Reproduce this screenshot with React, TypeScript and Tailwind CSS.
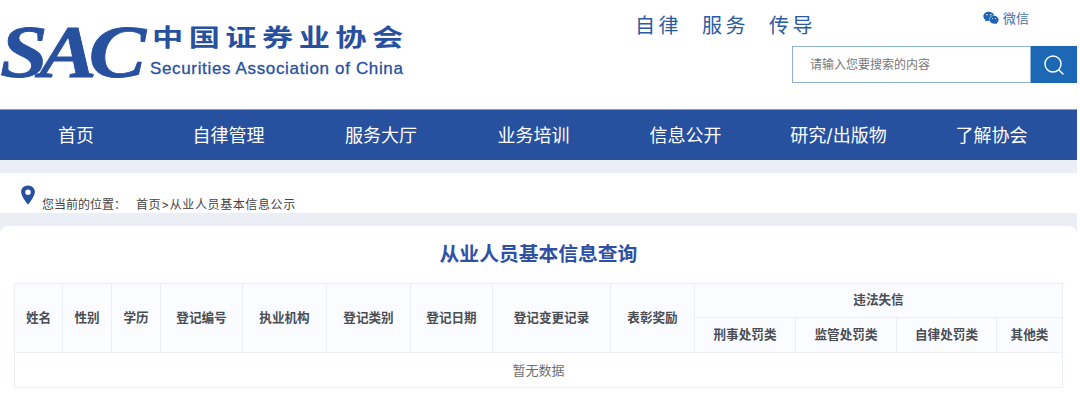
import { Search } from "lucide-react"
import { FaWeixin } from "react-icons/fa"
import { IoLocationSharp } from "react-icons/io5"

const CJK = "font-['Inter','Noto_Sans_CJK_SC',sans-serif]"

const NAV_ITEMS = [
  { label: "首页", className: "w-[152px]" },
  { label: "自律管理", className: "w-[153px]" },
  { label: "服务大厅", className: "w-[152px]" },
  { label: "业务培训", className: "w-[153px]" },
  { label: "信息公开", className: "w-[151px]" },
  { label: "研究/出版物", className: "w-[155px]" },
  { label: "了解协会", className: "w-[151px]" },
]

const SINGLE_COLS = [
  { label: "姓名", width: "w-[48px]" },
  { label: "性别", width: "w-[49px]" },
  { label: "学历", width: "w-[49px]" },
  { label: "登记编号", width: "w-[82px]" },
  { label: "执业机构", width: "w-[84px]" },
  { label: "登记类别", width: "w-[84px]" },
  { label: "登记日期", width: "w-[82px]" },
  { label: "登记变更记录", width: "w-[118px]" },
  { label: "表彰奖励", width: "w-[84px]" },
]

const SUB_COLS = [
  { label: "刑事处罚类", width: "w-[101px]" },
  { label: "监管处罚类", width: "w-[101px]" },
  { label: "自律处罚类", width: "w-[100px]" },
  { label: "其他类", width: "w-[66px]" },
]

function Logo() {
  return (
    <div className="flex items-start pt-[22px]">
      <div className="w-[150px] h-[60px] origin-left scale-x-[1.16] font-['Liberation_Serif',serif] font-bold italic text-[74px] leading-[60px] tracking-[-7px] [-webkit-text-stroke:0.8px_#27509f] text-[#27509f] whitespace-nowrap">
        SAC
      </div>
      <div className="flex flex-col">
        <div className={`${CJK} ml-[2px] mt-[1px] origin-left scale-x-[1.3] text-[24px] leading-[30px] font-bold tracking-[4.2px] text-[#27509f] whitespace-nowrap`}>
          中国证券业协会
        </div>
        <div className="mt-[6px] font-['Liberation_Sans',sans-serif] text-[17px] leading-[20px] tracking-[0.65px] [-webkit-text-stroke:0.3px_#27509f] text-[#27509f] whitespace-nowrap">
          Securities Association of China
        </div>
      </div>
    </div>
  )
}

function Header() {
  return (
    <header className="h-[109px] flex justify-between bg-white">
      <Logo />
      <div className="w-[445px] flex">
        <div className={`${CJK} w-[157px] pl-[3px] pt-[12px] text-[20px] leading-[28px] tracking-[3.5px] text-[#2a5aa0] whitespace-nowrap`}>
          <span>自律</span>
          <span className="ml-[20px]">服务</span>
          <span className="ml-[20px]">传导</span>
        </div>
        <div className="flex-1 flex flex-col items-end">
          <div className={`${CJK} h-[46px] w-[94px] pt-[9px] flex items-start gap-[4px] text-[13px] leading-[18px] text-[#3f6eb0]`}>
            <FaWeixin className="w-[16px] h-[16px] mt-[1px] text-[#1d65b3]" />
            <span>微信</span>
          </div>
          <div className="flex w-[285px] h-[37px]">
            <div className={`${CJK} flex-1 pl-[17px] border border-[#8fb0d8] flex items-center text-[12px] text-[#777]`}>
              请输入您要搜索的内容
            </div>
            <div className="w-[46px] bg-[#1c68b4] flex items-center justify-center">
              <Search className="w-[24px] h-[24px] text-white" strokeWidth={1.4} />
            </div>
          </div>
        </div>
      </div>
    </header>
  )
}

function Nav() {
  return (
    <nav className="h-[51px] flex bg-[#27509f] border-t border-[#7f9ccb]">
      {NAV_ITEMS.map((item) => (
        <div
          key={item.label}
          className={`${item.className} ${CJK} flex items-center justify-center text-[18px] text-white whitespace-nowrap`}
        >
          {item.label}
        </div>
      ))}
    </nav>
  )
}

function Breadcrumb() {
  return (
    <div className={`${CJK} h-[40px] flex bg-white pl-[17px] text-[12px] text-[#444]`}>
      <IoLocationSharp className="w-[22px] h-[22px] mt-[11px] text-[#27509f]" />
      <div className="ml-[3px] pt-[24px] leading-[16px] whitespace-nowrap">
        <span>您当前的位置：</span>
        <span className="ml-[10px] tracking-[0.6px]">首页&gt;从业人员基本信息公示</span>
      </div>
    </div>
  )
}

function ResultTable() {
  const th = "border-r border-b border-[#ebeef5] font-bold text-[12.6px] text-[#4a4d52] bg-[#fafcff] p-0 text-center"
  return (
    <table className={`${CJK} table-fixed w-[1049px] ml-[14px] border-separate border-spacing-0 border-t border-l border-b border-[#ebeef5]`}>
      <colgroup>
        {SINGLE_COLS.map((col) => (
          <col key={col.label} className={col.width} />
        ))}
        {SUB_COLS.map((col) => (
          <col key={col.label} className={col.width} />
        ))}
      </colgroup>
      <thead>
        <tr className="h-[34px]">
          {SINGLE_COLS.map((col) => (
            <th key={col.label} rowSpan={2} className={th}>
              {col.label}
            </th>
          ))}
          <th colSpan={4} className={`${th} bg-[#f9fafc]`}>
            违法失信
          </th>
        </tr>
        <tr className="h-[35px]">
          {SUB_COLS.map((col) => (
            <th key={col.label} className={th}>
              {col.label}
            </th>
          ))}
        </tr>
      </thead>
      <tbody>
        <tr className="h-[34px]">
          <td colSpan={13} className="pt-[2px] border-r border-[#ebeef5] text-center text-[13px] text-[#6b7075]">
            暂无数据
          </td>
        </tr>
      </tbody>
    </table>
  )
}

export default function App() {
  return (
    <div className="w-[1080px] h-[418px] bg-white overflow-hidden">
      <div className="w-[1077px]">
        <Header />
        <Nav />
        <div className="h-[13px] bg-[#eceef5]" />
        <Breadcrumb />
        <div className="bg-[#eceef5] pt-[13px]">
          <main className="rounded-t-[8px] bg-white h-[192px]">
            <h1 className={`${CJK} h-[57px] pt-[13px] text-center text-[19.8px] leading-[30px] font-bold text-[#2f50a5]`}>
              从业人员基本信息查询
            </h1>
            <ResultTable />
          </main>
        </div>
      </div>
    </div>
  )
}
